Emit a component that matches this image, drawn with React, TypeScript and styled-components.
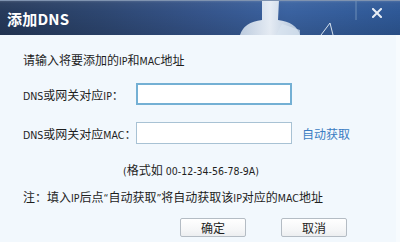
import styled, { createGlobalStyle } from 'styled-components';

const GlobalStyle = createGlobalStyle`
  html, body {
    margin: 0;
    padding: 0;
    background: #f2f8fd;
  }
  body {
    font-family: "Noto Sans CJK SC", "Liberation Sans", sans-serif;
    font-size: 12px;
    color: #1e1e1e;
  }
`;

const Dialog = styled.div`
  width: 400px;
  height: 242px;
  display: flex;
  flex-direction: column;
  background: #f2f8fd;
  overflow: hidden;
`;

const TitleBar = styled.div`
  position: relative;
  height: 35px;
  flex: none;
  display: flex;
  align-items: center;
  justify-content: space-between;
  padding: 0 18px 0 7px;
  background:
    linear-gradient(180deg, rgba(255,255,255,0.18) 0px, rgba(255,255,255,0.04) 3px, rgba(0,0,0,0) 12px, rgba(0,0,0,0.12) 35px),
    linear-gradient(90deg, #263a5b 0%, #2d4670 25%, #35548a 50%, #3a62a0 72%, #2e5896 100%);
  overflow: hidden;
`;

const Title = styled.div`
  position: relative;
  z-index: 1;
  color: #ffffff;
  font-size: 15px;
  font-weight: bold;
  letter-spacing: 0.2px;
  margin-top: 1px;
`;

const Close = styled.div`
  position: relative;
  z-index: 1;
  width: 10px;
  height: 10px;
  margin-top: -9px;
  display: flex;
`;

const Decor = styled.svg`
  position: absolute;
  left: 0;
  top: 0;
`;

const Body = styled.div`
  flex: 1;
  display: flex;
  flex-direction: column;
  padding: 17px 0 0 23px;
  border-right: 4px solid #f7fbfe;
`;

// latin runs are narrow in the original (half-width glyphs)
const En = styled.span`
  font-family: "DejaVu Sans Condensed", "Liberation Sans", sans-serif;
  font-size: 10.5px;
`;

const Line = styled.div<{ $indent?: number; $top?: number }>`
  line-height: 16px;
  padding-left: ${(p) => p.$indent ?? 0}px;
  margin-top: ${(p) => p.$top ?? 0}px;
  white-space: nowrap;
`;

const FieldRow = styled.div<{ $top: number }>`
  display: flex;
  align-items: center;
  margin-top: ${(p) => p.$top}px;
  white-space: nowrap;
`;

const Label = styled.div`
  width: 113px;
  flex: none;
`;

const Input = styled.div<{ $focus?: boolean }>`
  width: 156px;
  height: 22px;
  box-sizing: border-box;
  background: #ffffff;
  border: ${(p) => (p.$focus ? '2px solid #74b0d4' : '1px solid #a8c2d4')};
`;

const Link = styled.span`
  color: #3a7cc2;
  margin-left: 10px;
`;

const Buttons = styled.div`
  display: flex;
  gap: 35px;
  margin-top: 12px;
  padding-left: 157px;
`;

const Button = styled.div`
  width: 66px;
  height: 19px;
  box-sizing: border-box;
  border: 1px solid #b4bcc4;
  border-radius: 2px;
  background: linear-gradient(180deg, #ffffff 0%, #f6f7f8 60%, #eceef0 100%);
  display: flex;
  align-items: center;
  justify-content: center;
  line-height: 17px;
  color: #1e1e1e;
`;

export default function App() {
  return (
    <Dialog>
      <GlobalStyle />
      <TitleBar>
        <Decor width="400" height="35" viewBox="0 0 400 35">
          <defs>
            <linearGradient id="bottle" x1="0" y1="0" x2="1" y2="0">
              <stop offset="0" stopColor="#c8d6e6" />
              <stop offset="0.5" stopColor="#f4f8fc" />
              <stop offset="1" stopColor="#b8cade" />
            </linearGradient>
          </defs>
          <path d="M262 0 L279 0 L278 20 Q296 22 300 35 L240 35 Q244 22 262 20 Z" fill="url(#bottle)" opacity="0.92" />
          <path d="M282 24 L300 30 L300 35 L276 35 Z" fill="#d8e4f0" opacity="0.7" />
          <path d="M321 35 L330 23 L333 35" fill="none" stroke="#d6e2ee" strokeWidth="1" />
          <line x1="356" y1="0" x2="356" y2="20" stroke="#6f8fb8" strokeWidth="1" />
          <rect x="0" y="0" width="400" height="1" fill="#7f93b0" />
        </Decor>
        <Title>添加DNS</Title>
        <Close>
          <svg width="10" height="10" viewBox="0 0 10 10">
            <path d="M1 1 L9 9 M9 1 L1 9" stroke="#e8eef6" strokeWidth="2" strokeLinecap="square" />
          </svg>
        </Close>
      </TitleBar>
      <Body>
        <Line>请输入将要添加的<En>IP</En>和<En>MAC</En>地址</Line>
        <FieldRow $top={14}>
          <Label><En>DNS</En>或网关对应<En>IP</En>：</Label>
          <Input $focus />
        </FieldRow>
        <FieldRow $top={17}>
          <Label><En>DNS</En>或网关对应<En>MAC</En>：</Label>
          <Input />
          <Link>自动获取</Link>
        </FieldRow>
        <Line $indent={100} $top={18}><En>(</En>格式如<En> 00-12-34-56-78-9A)</En></Line>
        <Line $top={10}>注：填入<En>IP</En>后点<En>“</En>自动获取<En>”</En>将自动获取该<En>IP</En>对应的<En>MAC</En>地址</Line>
        <Buttons>
          <Button>确定</Button>
          <Button>取消</Button>
        </Buttons>
      </Body>
    </Dialog>
  );
}
